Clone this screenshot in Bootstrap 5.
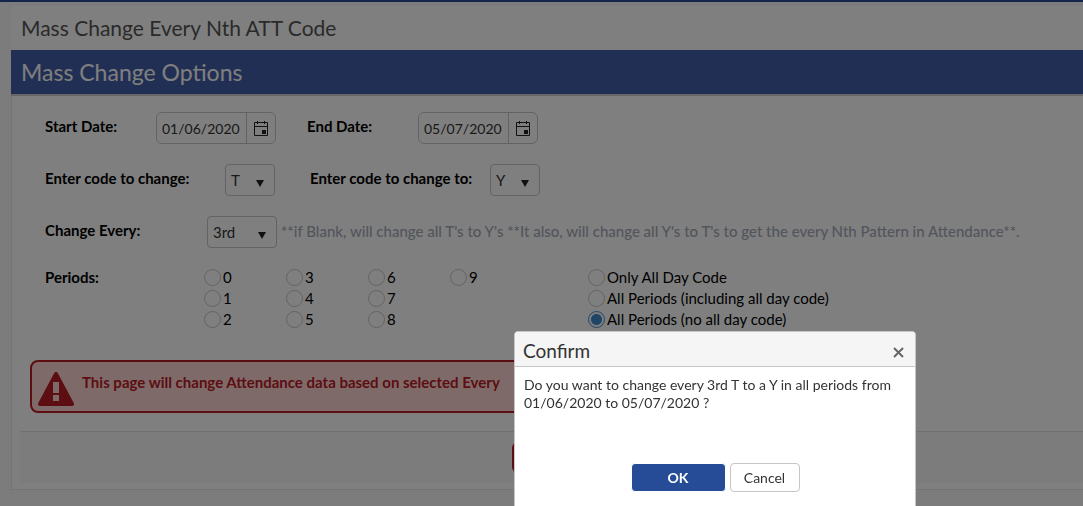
<!DOCTYPE html>
<html lang="en">
<head>
<meta charset="utf-8">
<meta name="viewport" content="width=device-width, initial-scale=1">
<title>Mass Change Every Nth ATT Code</title>
<link href="https://cdn.jsdelivr.net/npm/bootstrap@5.3.0/dist/css/bootstrap.min.css" rel="stylesheet">
<style>
  body { font-family: Lato, "Open Sans", sans-serif; font-size: 15px; line-height: 21px; background: #f8f8f8; color: #000; overflow: hidden; }
  .page-frame { border-top: 2px solid #264b96; padding: 4px 0 0 11px; }
  .page-title { font-size: 21px; line-height: 44px; padding-left: 10px; margin: 0; background: #fff; color: #555; font-weight: 400; white-space: nowrap; }
  .panel-title { font-size: 23px; line-height: 44px; height: 46px; padding-left: 10px; margin: 0; background: #425ea8; color: #fff; border-bottom: 2px solid #ccc; font-weight: 400; white-space: nowrap; }
  .panel-box { background: #fff; border: solid #e8e8e8; border-width: 0 0 1px 1px; padding: 16px 0 6px 8px; }
  .form-line { height: 32px; margin-bottom: 20px; padding-left: 25px; white-space: nowrap; }
  .form-line-last { margin-bottom: 19px; }
  .cap { font-weight: 700; line-height: 28px; }
  .cap-date { width: 111px; }
  .cap-code { width: 180px; }
  .cap-every { width: 162px; }
  .cap-periods { width: 159px; line-height: 20px; }
  .cap-target { width: 180px; }
  .date-box { width: 120px; margin-right: 31px; flex: none; flex-wrap: nowrap; }
  .date-box .form-control { padding: 0 0 0 5px; color: #333; font-size: 14px; border-color: #c6c6c6; }
  .date-box .btn { width: 30px; padding: 0; border-color: #c6c6c6; flex: none; display: flex; align-items: center; justify-content: center; }
  .pick { width: 50px; height: 32px; padding: 0 5px; font-size: 15px; color: #333; border: 1px solid #c6c6c6; border-radius: 4px; margin-right: 35px; flex: none;
    background: #fff url("data:image/svg+xml,%3Csvg xmlns='http://www.w3.org/2000/svg' width='8' height='7'%3E%3Cpath d='M0 0h8L4 7z' fill='%23222'/%3E%3C/svg%3E") no-repeat right 10px top 15px; }
  .pick-wide { width: 70px; margin-right: 4px; }
  .hint { color: #a4abb8; font-weight: 500; line-height: 30px; }
  .periods { padding-left: 25px; white-space: nowrap; }
  .period-set { width: 82px; }
  .last-set { margin-left: 56px; }
  .opt { display: flex; align-items: center; height: 21px; gap: 2px; }
  .opt input { width: 17px; height: 17px; margin: 0; flex: none; border: 1px solid #c6c6c6; }
  .opt input:checked { border: 1px solid #428bca; background: #fff radial-gradient(circle, #428bca 5px, #fff 6px); }
  .warn { width: 70%; border: 2px solid #b91c24; border-radius: 8px; background: #ffd4d4; color: #b91c24; height: 53px; margin: 30px 10px 18px; padding: 10px 6px; gap: 8px; line-height: 20px; font-weight: 700; overflow: hidden; white-space: nowrap; }
  .actions { background: #f8f8f8; border-top: 1px solid #e0e0e0; height: 52px; padding: 10px 0 0 492px; }
  .btn-run { width: 100px; height: 31px; background: #b91c24; color: #fff; padding: 0; font-size: 15px; }
  .confirm-box { position: absolute; left: 514px; top: 331px; width: 402px; z-index: 1060; margin: 0; }
  .confirm-box .modal-content { background: #fff; border: 1px solid #c6c6c6; border-radius: 4px; color: #333; overflow: hidden; }
  .confirm-box .modal-header { height: 35px; padding: 3px 9px 0 8px; background: #f5f5f5; border-bottom: 1px solid #c6c6c6; }
  .confirm-box .modal-title { font-size: 19px; line-height: 30px; font-weight: 400; }
  .x-btn { border: 0; background: none; padding: 0 2px; display: flex; margin-top: 4px; }
  .confirm-box .modal-body { font-size: 14px; line-height: 18px; padding: 9px; height: 95px; }
  .confirm-box .modal-footer { border: 0; padding: 0 0 20px; gap: 4px; height: 50px; justify-content: center; }
  .confirm-box .modal-footer .btn { margin: 0; height: 29px; padding: 0; font-size: 14px; border-radius: 4px; }
  .btn-ok, .btn-ok:hover { width: 95px; background: #274c97; border: 1px solid #fff; color: #fff; font-weight: 700; }
  .btn-no { width: 70px; color: #333; background: #fff; }
  .confirm-box .modal-footer .btn-no { border: 1px solid #c6c6c6; }
</style>
</head>
<body>
<main class="page-frame">
  <h1 class="page-title">Mass Change Every Nth ATT Code</h1>
  <h2 class="panel-title">Mass Change Options</h2>
  <form class="panel-box">
    <div class="form-line d-flex">
      <label class="cap cap-date" for="start">Start Date:</label>
      <div class="input-group date-box">
        <input class="form-control" id="start" type="text" value="01/06/2020">
        <button class="btn" type="button" aria-label="Pick start date"><svg width="14" height="16" viewBox="0 0 14 16"><path d="M.5 2.500h13v13H.5zM.5 6.500h13" fill="none" stroke="#222"/><path d="M3 1h1v3H3zM10 1h1v3h-1zM2 2h3v1H2zM9 2h3v1H9zM8 10h4v4H8z" fill="#222"/></svg></button>
      </div>
      <label class="cap cap-date" for="end">End Date:</label>
      <div class="input-group date-box">
        <input class="form-control" id="end" type="text" value="05/07/2020">
        <button class="btn" type="button" aria-label="Pick end date"><svg width="14" height="16" viewBox="0 0 14 16"><path d="M.5 2.500h13v13H.5zM.5 6.500h13" fill="none" stroke="#222"/><path d="M3 1h1v3H3zM10 1h1v3h-1zM2 2h3v1H2zM9 2h3v1H9zM8 10h4v4H8z" fill="#222"/></svg></button>
      </div>
    </div>
    <div class="form-line d-flex">
      <label class="cap cap-code" for="from">Enter code to change:</label>
      <select class="pick form-select" id="from"><option>T</option></select>
      <label class="cap cap-target" for="to">Enter code to change to:</label>
      <select class="pick form-select" id="to"><option>Y</option></select>
    </div>
    <div class="form-line form-line-last d-flex">
      <label class="cap cap-every" for="every">Change Every:</label>
      <select class="pick form-select pick-wide" id="every"><option>3rd</option></select>
      <span class="hint">**if Blank, will change all T's to Y's **It also, will change all Y's to T's to get the every Nth Pattern in Attendance**.</span>
    </div>
    <div class="periods d-flex" role="radiogroup" aria-labelledby="plabel">
      <span class="cap cap-periods" id="plabel">Periods:</span>
      <div class="period-set">
        <label class="opt"><input class="form-check-input" type="radio" name="p">0</label>
        <label class="opt"><input class="form-check-input" type="radio" name="p">1</label>
        <label class="opt"><input class="form-check-input" type="radio" name="p">2</label>
      </div>
      <div class="period-set">
        <label class="opt"><input class="form-check-input" type="radio" name="p">3</label>
        <label class="opt"><input class="form-check-input" type="radio" name="p">4</label>
        <label class="opt"><input class="form-check-input" type="radio" name="p">5</label>
      </div>
      <div class="period-set">
        <label class="opt"><input class="form-check-input" type="radio" name="p">6</label>
        <label class="opt"><input class="form-check-input" type="radio" name="p">7</label>
        <label class="opt"><input class="form-check-input" type="radio" name="p">8</label>
      </div>
      <div class="period-set">
        <label class="opt"><input class="form-check-input" type="radio" name="p">9</label>
      </div>
      <div class="last-set">
        <label class="opt"><input class="form-check-input" type="radio" name="p">Only All Day Code</label>
        <label class="opt"><input class="form-check-input" type="radio" name="p">All Periods (including all day code)</label>
        <label class="opt"><input class="form-check-input" type="radio" name="p" checked>All Periods (no all day code)</label>
      </div>
    </div>
    <div class="warn d-flex" role="alert">
      <svg class="flex-shrink-0" width="36" height="34" viewBox="0 0 36 34"><path d="M18 2 34 32H2z" fill="#b91c24" stroke="#b91c24" stroke-width="4" stroke-linejoin="round"/><path d="M15 10h6v11h-6zM15 23h6v6h-6z" fill="#ffd4d4"/></svg>
      <span>This page will change Attendance data based on selected Every</span>
    </div>
    <div class="actions"><button class="btn btn-run" type="button" aria-label="Run"></button></div>
  </form>
</main>
<div class="modal-backdrop show"></div>
<div class="modal-dialog confirm-box" role="dialog" aria-modal="true" aria-labelledby="ctitle">
  <div class="modal-content">
    <div class="modal-header d-flex justify-content-between">
      <h2 class="modal-title" id="ctitle">Confirm</h2>
      <button class="x-btn" type="button" aria-label="Close"><svg width="11" height="11" viewBox="0 0 11 11"><path d="m1 1 9 9m0-9-9 9" stroke="#666" stroke-width="2"/></svg></button>
    </div>
    <div class="modal-body">Do you want to change every 3rd T to a Y in all periods from 01/06/2020 to 05/07/2020 ?</div>
    <div class="modal-footer">
      <button class="btn btn-ok" type="button">OK</button>
      <button class="btn btn-no" type="button">Cancel</button>
    </div>
  </div>
</div>
<script src="https://cdn.jsdelivr.net/npm/bootstrap@5.3.0/dist/js/bootstrap.bundle.min.js"></script>
</body>
</html>
